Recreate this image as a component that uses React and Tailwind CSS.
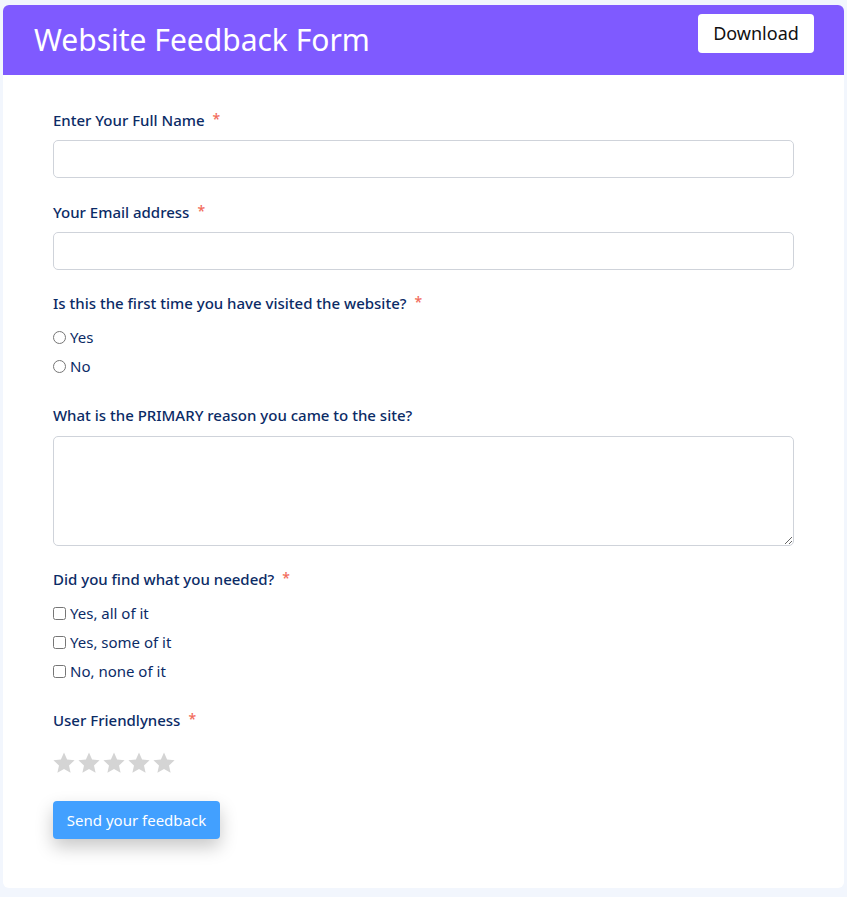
import React from 'react';

const font = { fontFamily: '"Noto Sans", "Open Sans", Arial, sans-serif' };

function Label({ children, required }) {
  return (
    <div className="h-[20px] flex items-center text-[15px] font-medium text-[#0b2b66] leading-[20px]">
      <span>{children}</span>
      {required && <span className="ml-[8px] text-[#f26b5b] text-[14px] -mt-[2px]">*</span>}
    </div>
  );
}

function Star() {
  return (
    <svg width="24" height="24" viewBox="0 0 24 24" className="mr-[1px]">
      <path
        d="M12 1.6l3.1 6.9 7.5.8-5.6 5.1 1.6 7.4L12 18l-6.6 3.8 1.6-7.4-5.6-5.1 7.5-.8z"
        fill="#d4d4d4"
      />
    </svg>
  );
}

export default function App() {
  const radios = ['Yes', 'No'];
  const checks = ['Yes, all of it', 'Yes, some of it', 'No, none of it'];

  return (
    <div className="min-h-[897px] bg-[#f2f6fd] pt-[5px] pb-[9px] px-[3px]" style={font}>
      <div className="bg-white rounded-[6px] overflow-hidden">
        {/* Header */}
        <div className="h-[70px] bg-[#7f5aff] flex items-start justify-between pl-[31px] pr-[30px]">
          <h1 className="self-center text-white text-[30px] leading-none font-normal">Website Feedback Form</h1>
          <button className="mt-[9px] bg-white rounded-[4px] w-[116px] h-[39px] text-[18px] text-[#111]">
            Download
          </button>
        </div>

        {/* Form */}
        <div className="px-[50px] pt-[35px] pb-[49px]">
          <Label required>Enter Your Full Name</Label>
          <input className="mt-[10px] w-full h-[38px] border border-[#cfd3da] rounded-[5px]" />

          <div className="mt-[24px]">
            <Label required>Your Email address</Label>
            <input className="mt-[10px] w-full h-[38px] border border-[#cfd3da] rounded-[5px]" />
          </div>

          <div className="mt-[23px]">
            <Label required>Is this the first time you have visited the website?</Label>
            <div className="mt-[10px]">
              {radios.map((r) => (
                <label key={r} className="h-[29px] flex items-center text-[15px] text-[#0b2b66]">
                  <input type="radio" name="first" className="m-0 mr-[4px] w-[13px] h-[13px]" />
                  {r}
                </label>
              ))}
            </div>
          </div>

          <div className="mt-[24px]">
            <Label>What is the PRIMARY reason you came to the site?</Label>
            <textarea className="mt-[11px] w-full h-[110px] border border-[#cfd3da] rounded-[5px] block" />
          </div>

          <div className="mt-[23px]">
            <Label required>Did you find what you needed?</Label>
            <div className="mt-[10px]">
              {checks.map((c) => (
                <label key={c} className="h-[29px] flex items-center text-[15px] text-[#0b2b66]">
                  <input type="checkbox" className="m-0 mr-[4px] w-[13px] h-[13px]" />
                  {c}
                </label>
              ))}
            </div>
          </div>

          <div className="mt-[24px]">
            <Label required>User Friendlyness</Label>
            <div className="mt-[21px] flex -ml-[1px]">
              {[0, 1, 2, 3, 4].map((i) => (
                <Star key={i} />
              ))}
            </div>
          </div>

          <button className="mt-[26px] w-[167px] h-[38px] bg-[#42a0ff] rounded-[4px] text-white text-[15px] shadow-[0_8px_18px_rgba(0,0,0,0.22)]">
            Send your feedback
          </button>
        </div>
      </div>
    </div>
  );
}
